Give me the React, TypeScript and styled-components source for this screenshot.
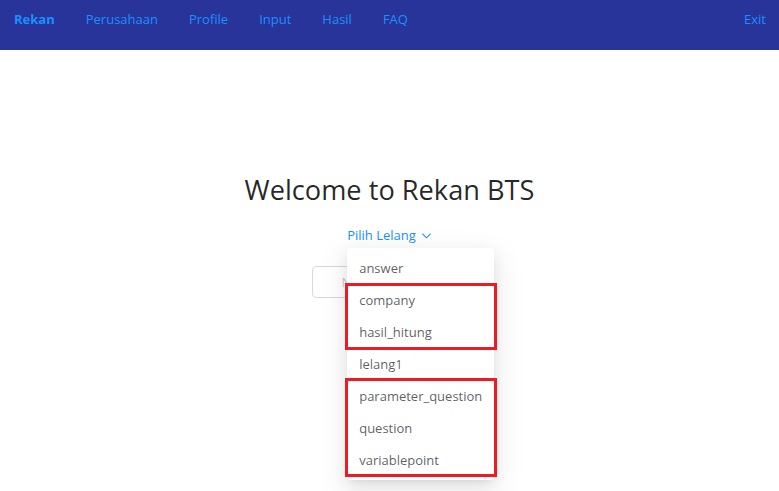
import React from "react";
import styled, { createGlobalStyle } from "styled-components";

const Global = createGlobalStyle`
  html, body { margin: 0; padding: 0; background: #fff; }
  body { font-family: "Open Sans", "Noto Sans", sans-serif; font-size: 13px; color: rgba(0,0,0,0.85); }
  #root { min-height: 100vh; }
  * { box-sizing: border-box; }
`;

const Header = styled.header`
  height: 50px;
  background: #29349a;
  display: flex;
  align-items: flex-start;
  padding: 0 13px 0 14px;
`;

const Nav = styled.nav`
  display: flex;
  gap: 31px;
  flex: 1;
`;

const NavLink = styled.a<{ $brand?: boolean }>`
  color: #1890ff;
  font-weight: ${(p) => (p.$brand ? 700 : 400)};
  line-height: 38px;
  text-decoration: none;
  cursor: pointer;
`;

const Main = styled.main`
  display: flex;
  flex-direction: column;
  align-items: center;
  padding-top: 120px;
`;

const Title = styled.h2`
  margin: 0;
  font-size: 27.2px;
  font-weight: 500;
  line-height: 40px;
  color: rgba(0,0,0,0.85);
`;

const DropWrap = styled.div`
  position: relative;
  margin-top: 14px;
`;

const Trigger = styled.a`
  display: flex;
  align-items: center;
  gap: 5px;
  color: #1890ff;
  line-height: 22px;
  cursor: pointer;
`;

const Menu = styled.ul`
  position: absolute;
  top: 24px;
  left: 0;
  width: 147px;
  margin: 0;
  padding: 4px 0;
  list-style: none;
  background: #fff;
  border-radius: 4px;
  box-shadow: 0 3px 6px -4px rgba(0,0,0,.12), 0 6px 16px 0 rgba(0,0,0,.08), 0 9px 28px 8px rgba(0,0,0,.05);
  z-index: 2;
`;

const Item = styled.li`
  padding: 5px 12px;
  line-height: 22px;
  color: rgba(0,0,0,0.65);
  white-space: nowrap;
`;

const Mark = styled.div<{ $top: number; $height: number }>`
  position: absolute;
  left: -2px;
  width: 152px;
  top: ${(p) => p.$top}px;
  height: ${(p) => p.$height}px;
  border: 3px solid #ed1c24;
  pointer-events: none;
`;

const Button = styled.button`
  margin-top: 20px;
  width: 156px;
  height: 32px;
  padding: 0 0 0 29px;
  text-align: left;
  font: inherit;
  color: rgba(0,0,0,0.25);
  background: #fff;
  border: 1px solid #d9d9d9;
  border-radius: 4px;
`;

const items = ["answer", "company", "hasil_hitung", "lelang1", "parameter_question", "question", "variablepoint"];

export default function App() {
  return (
    <>
      <Global />
      <Header>
        <Nav>
          <NavLink $brand>Rekan</NavLink>
          <NavLink>Perusahaan</NavLink>
          <NavLink>Profile</NavLink>
          <NavLink>Input</NavLink>
          <NavLink>Hasil</NavLink>
          <NavLink>FAQ</NavLink>
        </Nav>
        <NavLink>Exit</NavLink>
      </Header>
      <Main>
        <Title>Welcome to Rekan BTS</Title>
        <DropWrap>
          <Trigger>
            Pilih Lelang
            <svg width="11" height="11" viewBox="0 0 12 12" fill="none" stroke="#1890ff" strokeWidth="1.2">
              <path d="M1.5 4 L6 8.5 L10.5 4" />
            </svg>
          </Trigger>
          <Menu>
            {items.map((i) => (
              <Item key={i}>{i}</Item>
            ))}
            <Mark $top={35} $height={67} />
            <Mark $top={130} $height={99} />
          </Menu>
        </DropWrap>
        <Button>Next</Button>
      </Main>
    </>
  );
}
